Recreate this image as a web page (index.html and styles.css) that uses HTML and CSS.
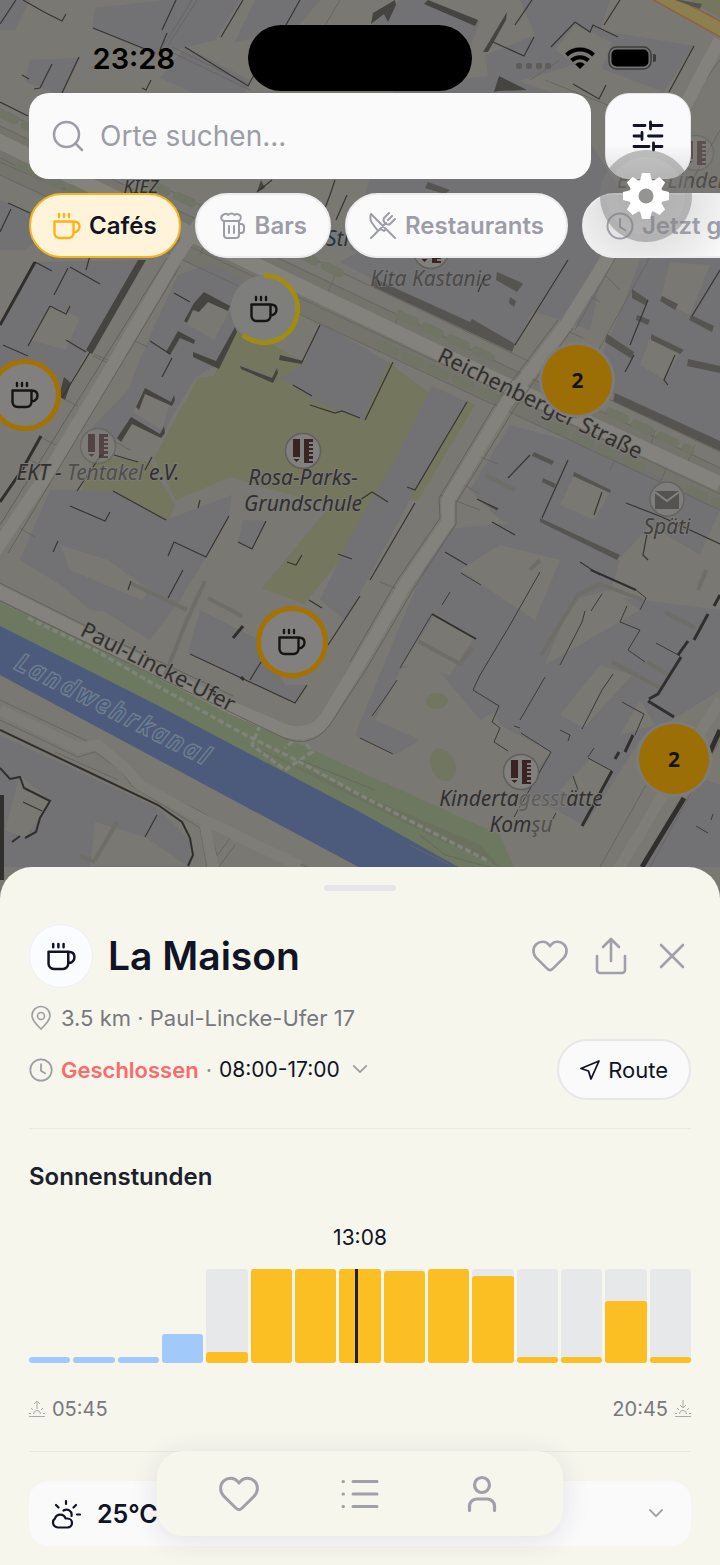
FILE: index.html
```html
<!DOCTYPE html>
<html lang="de">
<head>
<meta charset="utf-8">
<meta name="viewport" content="width=device-width, initial-scale=1">
<title>La Maison</title>
<link rel="stylesheet" href="styles.css">
</head>
<body>
<svg width="0" height="0" class="sprite" aria-hidden="true">
  <symbol id="cup" viewBox="0 0 28 28"><g fill="none" stroke="currentColor" stroke-width="2.400" stroke-linecap="round" stroke-linejoin="round"><path d="M1.500 9.500h19V21a5 5 0 0 1-5 5h-9a5 5 0 0 1-5-5zM20.500 9.500c4 0 6 2 6 5s-2 5.500-6 6M6 2v3M11 2v3M16 2v3"/></g></symbol>
  <symbol id="heart" viewBox="0 0 40 36"><path d="M20 33c-1 0-2-.6-3-1.600L5.500 20C1.500 16 1.500 9 5.500 5.500c4-3.600 10-3.300 13 .3l1.500 1.600 1.500-1.600c3-3.600 9-3.900 13-.3 4 3.500 4 10.500 0 14.500L23 31.400c-1 1-2 1.600-3 1.600z" fill="none" stroke="currentColor" stroke-width="2.800"/></symbol>
  <symbol id="clock" viewBox="0 0 28 28"><g fill="none" stroke="currentColor" stroke-width="2" stroke-linecap="round" stroke-linejoin="round"><circle cx="14" cy="14" r="12.500"/><path d="M14 7v8l5 3"/></g></symbol>
  <symbol id="chevron" viewBox="0 0 18 12"><path d="m2 2 7 7 7-7" fill="none" stroke="currentColor" stroke-width="2" stroke-linecap="round" stroke-linejoin="round"/></symbol>
  <symbol id="school" viewBox="0 0 38 38"><circle cx="19" cy="19" r="17.500" fill="#80807e" stroke="#62605d" stroke-width="1.500"/><path d="M9 7h7v18H9zM9.500 27h6L12.500 30zM20 7h9v3h-4v2h4v2h-4v2h4v2h-4v2h4v2h-4v2h4v3h-4v2h4v2h-9z" fill="#392323"/></symbol>
</svg>

<div class="app">
  <div class="map" role="region" aria-label="Karte">
    <svg class="map-art" viewBox="0 0 720 900" aria-hidden="true">
      <rect width="720" height="900" fill="#7a7872"/>
      <g fill="#74746d">
        <path d="M0 125 720 467V510L0 175z"/>
      </g>
      <g fill="#74765e">
        <path d="M237 325 214 376 198 378 154 458 176 500 230 477 330 506 262 588 304 604 350 548 440 460 445 405 388 362 300 360z"/>
        <path d="M95 456 150 462 175 505 157 545 105 518 80 495z"/><path d="M467 400 475 405 418 500 407 500z"/>
        <path d="M690 0h30v18z"/>
      </g>
      <g fill="#6c785f">
        <path d="M0 603 120 657 290 740 500 835 515 870H450L0 628z"/>
        <ellipse cx="437" cy="701" rx="11" ry="8" fill="#717660"/><ellipse cx="443" cy="765" rx="12" ry="17" transform="rotate(-25 443 765)" fill="#717660"/>
      </g>
      <path d="M240 740 340 785 480 845 500 867 430 835z" fill="#6c715f"/>
      <path d="M0 626 155 704 360 812 460 868V900H420L0 675z" fill="#4c5a7c"/>
      <path d="M28 618 95 650 150 682 240 732 300 762 360 795 490 862M260 725 252 745 285 770 312 752 300 735 285 748" fill="none" stroke="#80837a" stroke-width="3.500" stroke-dasharray="6 3"/>

      <g fill="#727274">
        <path d="M95 8 165 0 240 0 215 40 155 55 92 28z"/><path d="M0 0h30L15 30 0 30z"/><path d="M185 47 250 80 235 112 160 78z"/><path d="M255 0h65l-25 30-60 12z"/>
        <path d="M30 60 80 58 62 95 25 82z"/><path d="M375 22 400 0h30l50 22-20 50-90-45z"/><path d="M485 55 535 35 520 0h90l-20 60-100 30z"/><path d="M598 30 694 46 664 92 600 68z"/><path d="M395 85 500 75 560 95 620 190 590 330 350 250z"/>
        <path d="M0 200 30 212 58 225 25 250H0z"/>
        <path d="M34 262 138 260 88 350 63 395 0 370V325z"/><path d="M178 275 212 263 255 285 235 330 214 366 195 378 170 420 163 437 131 420 118 440 90 430 128 390 148 340z"/>
        <path d="M240 365 275 382 305 362 320 322 388 362 363 420 312 400 292 384z"/><path d="M432 386 467 402 415 490 370 575 345 620 320 600 354 530 395 460z"/>
        <path d="M50 490 113 491 166 520 232 495 229 516 206 557 180 600 150 640 20 560z"/><path d="M58 541 110 556 168 560 150 615 90 610 50 575z"/>
        <path d="M243 520 266 521 252 549 238 542z"/><path d="M200 610 260 640 285 685 307 685 295 703 188 652z"/>
        <path d="M560 260 515 345 475 325 375 280 340 262 380 240 480 240z"/><path d="M640 260 720 240V445L614 398 600 360 625 300z"/>
        <path d="M510 425 620 455 720 510 700 555 650 525 620 558 500 520 470 490z"/><path d="M440 530 540 520 620 560 590 660 480 720 430 660 400 670 375 720 420 740 395 755 355 735 390 650z"/>
        <path d="M540 575 600 595 720 610V690L640 740 585 826 520 790 551 752 500 725 480 675z"/><path d="M700 778 720 785V867H642z"/>
        <path d="M0 735 158 808 190 840V867H0z"/>
      </g>
      <g fill="#7a7872">
        <path d="M50 305 80 318 66 350 30 340z"/><path d="M205 296 230 310 214 340 185 323z"/><path d="M143 390 170 402 162 430 133 412z"/><path d="M60 545 108 560 150 590 142 600 70 570z"/>
        <path d="M500 5 525 10 510 45 480 30z"/><path d="M575 25 612 42 598 80 555 50z"/><path d="M650 338 680 352 665 380 640 365z"/><path d="M670 262 710 265 690 315 660 300z"/>
        <path d="M574 475 610 492 594 520 560 505z"/><path d="M434 616 474 638 450 675 402 665z"/><path d="M610 590 640 610 545 665 572 600z"/><path d="M600 665 632 675 584 728 560 715z"/><path d="M590 760 612 771 594 805 560 790z"/><path d="M640 700 655 725 620 735z"/>
        <path d="M500 545 560 560 535 620 460 570z"/><path d="M20 775 50 801 25 838 5 830z"/><path d="M95 822 145 837 188 866H90z"/>
      </g>

      <g fill="none" stroke="#686661" stroke-width="1">
        <path d="M0 110 720 452M0 175 720 510M0 126 720 468M0 158 720 494"/>
        <path d="M197 0 167 47M192 0 164 45M167 50 250 90M172 47 250 85M340 0 290 85M560 60 530 80M720 130 560 420M690 125 575 330M300 760 375 790M420 835 445 855 500 870M410 845 450 865M600 867 660 760M618 867 675 775M650 867 720 740"/>
        <path d="M130 339 148 347M93 356 108 363M94 354 110 361M62 398 78 406M40 437 56 445M28 459 44 467M112 440 130 450M20 528 35 537M620 290 600 270M560 328 583 338M582 292 600 302M478 456 498 464M462 484 480 494M400 590 380 582M440 495 480 510M655 430 648 455M695 445 685 468M240 265 250 240M325 300 335 275M400 310 390 340M620 450 610 470M668 465 658 486"/>
        <path d="M640 185 680 115 720 60M545 80 620 110M95 188 60 250M0 162 65 190M200 255 215 218M610 155 625 120"/>
        <path d="M0 700 85 740 113 755 140 783 198 810 265 850 310 868M0 720 78 757 95 752 120 770 132 786 200 828 207 867M210 828 230 838 217 856zM235 845 218 868M118 780 55 752"/>
      </g>
      <g fill="none" stroke="#84827c" stroke-linejoin="round">
        <path d="M-20 132 120 200 360 315 500 382 720 484" stroke-width="15"/>
        <path d="M205 215 173 262 110 370 50 470-8 555M720 40 640 190 605 262 566 325 507 402 448 500 448 522 405 585 360 662 326 718Q312 738 286 731L232 708 120 652 0 592-20 584" stroke-width="13"/>
        <path d="M0 710 78 748 98 745 125 768 140 785 200 818 300 866M720 700 612 880M205 825 214 872" stroke-width="11" stroke="#7f7d77"/>
      </g>
      <g fill="none" stroke="#62605c" stroke-width="1">
        <path d="M180 266 8 553M167 258 0 525M558 320 499 398 439 498 440 518 396 582 350 662M573 328 515 408 456 503 456 524 414 588 367 668 333 720Q315 750 284 738L0 601M0 583 120 643 233 696"/>
      </g>
      <g fill="none" stroke="#6f6d68" stroke-width="4" stroke-linejoin="round">
        <path d="M130 583 187 610M205 581 187 620 165 675M208 598 242 616M117 822 95 860M418 641 460 664 472 647M541 655 578 595 600 584 643 600M612 662 660 688M665 612 695 628M698 590 706 570M647 662 668 675M485 475 515 490M540 560 530 570M95 862 80 856"/>
      </g>
      <g fill="none" stroke="#6f7464" stroke-width="9" stroke-linecap="round" stroke-dasharray="16 12">
        <path d="M0 113 90 156 210 211M300 254 350 278M400 315 490 357M610 412 690 450M20 165 90 198M380 345 500 400M550 425 650 472M690 490 720 503"/>
      </g>
      <path d="M650-2h26l46 24v16z" fill="#8c8051" stroke="#916040" stroke-width="1.500"/>

      <g fill="#454441">
        <path d="M373 13 395 0 396 5 388 22 384 14 371 24zM428 0 478 20 475 26 424 4zM507 12 506 20 488 52 483 52zM499 76 527 90 498 91 494 92zM138 260 146 260 92 354 86 350zM204 292 230 306 228 311 208 302 199 312 193 310 187 323 184 321 194 303zM178 331 195 340 194 344 180 338 170 355 166 352zM235 327 237 332 219 369 193 357 193 352 216 361zM145 388 171 402 174 395 175 400 172 406 145 394 139 410 136 407zM131 417 160 434 164 426 165 433 161 438 132 424 121 442 117 438zM240 366 272 378 277 368 278 373 273 383 241 369zM280 355 303 361 302 364 279 360z"/>
        <path d="M64 377 71 383 65 400 59 396zM265 188 261 180 257 192z"/>
      </g>
      <g fill="#555451">
        <path d="M375 279 470 322 472 319 515 344 512 352 372 286zM497 272 520 282 523 284 517 292 496 280zM632 289 648 300 645 305 632 298zM607 334 634 352 632 359 605 342zM651 334 684 350 680 354 651 340zM662 296 678 304 675 310 660 301zM637 315 650 320 648 325 636 320zM615 393 720 441V451L613 401zM691 315 714 326 712 332 689 320zM688 359 720 366V373L687 366zM534 452 554 461 552 465 532 456zM574 472 611 490 610 493 573 476zM540 518 620 555 617 560 540 522zM543 478 556 484 554 488 542 482zM476 499 498 508 497 511zM510 297 516 301 514 307 509 303zM680 0 702 4 700 9 675 0zM428 182 450 190 445 194 425 188z"/>
      </g>
      <g fill="none" stroke="#363532" stroke-width="1.200">
        <path d="M16 0 0 24M23 0 44 12 62 21 66 14M93 28 155 53M176 0 162 30M167 33 160 50M243 0 221 37M300 0 286 25M185 47 248 86 254 75M52 64 40 88 34 89M79 57 62 93M22 75 29 79M151 80 146 90 142 88M0 102 28 116M8 203 30 213M11 209 0 232M272 180 257 192M335 180 330 195 322 216 312 228M347 195 336 220M35 262 52 271M68 268 54 295M70 267 100 284M91 252 86 270M50 306 28 346M50 306 66 314 70 306M90 352 62 398M66 340 86 352M3 345 28 356M174 293 190 302M150 341 170 354M172 358 162 377M302 362 320 325M293 385 312 396M310 405 335 413 342 411 360 418M152 457 145 470M101 455 77 491M114 455 138 462"/>
        <path d="M493 42 524 56 534 37M515 25 532 0M551 47 575 22 590 32 593 25 618 37M620 0 604 25M694 46 669 92M573 84 599 99 606 85M568 260 515 345M634 355 625 372M675 355 664 380 668 385M720 270 692 316M648 300 630 345M467 402 415 490 407 487M393 362 365 420M360 500 372 492 388 502M415 503 370 580M530 455 508 478M602 492 594 515M568 460 542 518M477 499 498 509M445 552 467 565M492 522 515 535M580 562 600 575M626 503 662 517 720 544M647 534 643 555 648 560M490 230 480 255M430 230 425 245M485 275 478 292"/>
        <path d="M229 516 206 557 174 542 168 556M113 491 166 520M70 506 105 521 110 512M53 552 58 541M200 500 198 508M266 521 252 549 238 542M338 554 352 559M183 570 168 598M302 555 296 565 287 562M128 590 131 581M190 654 295 703 307 685M261 662 250 680M360 596 328 645M309 600 322 608M157 815 145 837M23 802 42 811"/>
      </g>
      <g fill="none" stroke="#3b3a37" stroke-width="1">
        <path d="M461 573 481 585M450 592 442 605M432 614 400 668M397 680 385 698 372 716M540 572 510 625 480 675 473 690 499 706 492 722 500 728 494 742 508 751M602 594 591 611M585 611 582 622 560 665M545 677 520 720M590 570 636 590 646 598 640 610M627 606 620 622 640 630 628 650 645 662M656 643 680 656M613 674 602 690 582 729M622 702 644 714 635 735M521 733 551 752 514 817M560 730 570 735 568 741M520 728 514 726M360 738 393 754M588 757 594 748M588 758 612 771M573 776 578 790M556 813 545 833M711 820 713 814M696 826 708 833"/>
      </g>
      <g fill="none" stroke="#302f2d" stroke-width="4">
        <path d="M35 262 0 325M41 436 22 470 0 502" stroke-width="3"/><path d="M432 614 476 639M591 570 636 590" stroke-width="2"/>
        <path d="M708 614 694 640M688 641 678 655M681 657 658 694 649 699M648 701 674 717M720 595 714 606M633 735 625 752M619 752 615 759M612 771 582 826" stroke-width="3"/>
        <path d="M720 730 710 752M684 798 642 867" stroke-width="5"/>
        <path d="M0 730 80 768 158 805 182 822 190 838 193 855 188 866" stroke-width="2"/>
        <path d="M0 768 10 779 20 777 24 788 50 801 40 818 36 832 25 838M12 842 20 836" stroke-width="2"/><path d="M2 795V880" stroke-width="4"/>
        <path d="M243 626 238 632 233 638M212 693 216 695M241 677 244 680" stroke-width="3"/>
      </g>

      <g class="place">
        <text x="141" y="193" text-anchor="middle" class="district">KIEZ</text>
        <text x="326" y="246" class="district blue">Str</text>
        <text x="617" y="188" opacity=".6">EKT - Linden</text>
        <text x="431" y="286" text-anchor="middle" opacity=".6">Kita Kastanie</text>
        <text x="98" y="480" text-anchor="middle">EKT - <tspan fill-opacity=".6">Tentakel</tspan> e.V.</text>
        <text x="303" y="485" text-anchor="middle">Rosa-Parks-</text>
        <text x="303" y="511" text-anchor="middle">Grundschule</text>
        <text x="667" y="534" text-anchor="middle" fill-opacity=".8">Späti</text>
        <text x="521" y="806" text-anchor="middle">Kinderta<tspan fill-opacity=".4">gesst</tspan>ätte</text>
        <text x="521" y="832" text-anchor="middle">Kom<tspan fill-opacity=".6">şu</tspan></text>
      </g>
      <text class="street" transform="translate(436 361) rotate(26)">Reichenberger Straße</text>
      <text class="street" transform="translate(79 635) rotate(27)">Paul-Lincke-Ufer</text>
      <text class="water" transform="translate(14 668) rotate(27)">Landwehrkanal</text>
      <use href="#school" x="284" y="432" width="38" height="38"/>
      <use href="#school" x="79" y="427" width="38" height="38" opacity=".6"/>
      <use href="#school" x="502" y="753" width="38" height="38"/>
      <use href="#school" x="412" y="232" width="38" height="38"/>
      <use href="#school" x="677" y="134" width="38" height="38" opacity=".45"/>
      <circle cx="667" cy="499" r="17" fill="#7d7d7b" stroke="#666462" stroke-width="1.500"/>
      <path d="M655 491h24v18h-24z" fill="#555352"/><path d="m655 492 12 9 12-9" fill="none" stroke="#828280" stroke-width="2"/>
    </svg>

    <button class="pin pin-a" aria-label="Café"><svg class="ring" viewBox="0 0 72 72"><circle cx="36" cy="36" r="33.500" fill="#7e7e7c"/><path d="M36 2.500A33.500 33.500 0 1 1 15 62" fill="none" stroke="#a08c12" stroke-width="5"/></svg><svg class="glyph"><use href="#cup"/></svg></button>
    <button class="pin pin-b full" aria-label="Café"><svg class="glyph"><use href="#cup"/></svg></button>
    <button class="pin pin-c full" aria-label="Café"><svg class="glyph"><use href="#cup"/></svg></button>
    <button class="pin pin-d cluster">2</button>
    <button class="pin pin-e cluster">2</button>
  </div>

  <header class="top">
    <div class="status">
      <time class="time">23:28</time>
      <div class="island"></div>
      <div class="signals">
        <svg width="36" height="8" viewBox="0 0 36 8" class="dots"><g fill="#5e5d5a"><rect y="1" width="6" height="6" rx="2"/><rect x="10" y="1" width="6" height="6" rx="2"/><rect x="20" y="1" width="6" height="6" rx="2"/><rect x="29" y="1" width="6" height="6" rx="2"/></g></svg>
        <svg width="30" height="22" viewBox="0 0 30 22"><g fill="none" stroke="#000" stroke-width="4"><path d="M1.500 8a19.500 19.500 0 0 1 27 0"/><path d="M6.500 13.500a12.500 12.500 0 0 1 17 0"/></g><path d="m15 22-4.800-4.800a7 7 0 0 1 9.600 0z"/></svg>
        <svg width="48" height="24" viewBox="0 0 48 24"><rect x="1" y="1" width="42" height="22" rx="7.500" fill="none" stroke="#3d3c3a" stroke-width="1.500"/><rect x="3.500" y="3.500" width="37" height="17" rx="5"/><path d="M45 8v8a4 4 0 0 0 0-8z" fill="#3d3c3a"/></svg>
      </div>
    </div>
    <div class="search-row">
      <label class="search">
        <svg width="32" height="32" viewBox="0 0 32 32" fill="none" stroke="currentColor" stroke-width="2.500" stroke-linecap="round"><circle cx="14.500" cy="14.500" r="12.500"/><path d="m23.500 23.500 6.500 6.500"/></svg>
        <input type="search" placeholder="Orte suchen..." aria-label="Orte suchen">
      </label>
      <button class="filter" aria-label="Filter"><svg width="32" height="32" viewBox="0 0 32 32" fill="none" stroke="currentColor" stroke-width="2.800" stroke-linecap="round"><path d="M2 5.500h11M20 5.500h10M18.500 2v7M2 16h8M16.500 16H30M10 12.500v7M2 26.500h15M22 26.500h8M21.500 23v7"/></svg></button>
    </div>
    <nav class="chips" aria-label="Kategorien">
      <button class="chip active" aria-pressed="true"><svg><use href="#cup"/></svg>Cafés</button>
      <button class="chip"><svg viewBox="0 0 28 28" fill="none" stroke="currentColor" stroke-width="2" stroke-linecap="round" stroke-linejoin="round"><path d="M5 9v14a3 3 0 0 0 3 3h9a3 3 0 0 0 3-3V9zM20 12h2a3 3 0 0 1 3 3v3a3 3 0 0 1-3 3h-2M10 14v7M15 14v7M5 9a3.200 3.200 0 0 1-1-6c2-2 4-1.500 5 0 1.500-2 5-2 6.500 0 2-1.500 5-1 6 1 .8 2.500-.5 4.500-2 5"/></svg>Bars</button>
      <button class="chip"><svg viewBox="0 0 28 28" fill="none" stroke="currentColor" stroke-width="2" stroke-linecap="round" stroke-linejoin="round"><path d="M17 17 26 26M2 26 17 11M12 17 9 19 3 11C1 8 1 5 2 2L17 17l-2 2zM20 1l-5 5c-1 2 0 4 1 5s3 2 5 1l5-5M23 4l-4 4"/></svg>Restaurants</button>
      <button class="chip late"><svg><use href="#clock"/></svg>Jetzt geöffnet</button>
    </nav>
    <button class="gear" aria-label="Einstellungen"><svg width="48" height="48" viewBox="-24 -24 48 48"><g fill="#fff"><circle r="17"/><g id="tooth"><path d="M-6-15-4-23H4L6-15zM-6 15-4 23H4L6 15z"/></g><use href="#tooth" transform="rotate(45)"/><use href="#tooth" transform="rotate(90)"/><use href="#tooth" transform="rotate(135)"/></g><circle r="7.500" fill="#949493"/></svg></button>
  </header>

  <main class="sheet">
    <div class="handle"></div>
    <div class="title-row">
      <div class="badge"><svg width="29" height="29"><use href="#cup"/></svg></div>
      <h1>La Maison</h1>
      <div class="actions">
        <button aria-label="Merken"><svg width="38" height="34"><use href="#heart"/></svg></button>
        <button aria-label="Teilen"><svg width="32" height="38" viewBox="0 0 32 38" fill="none" stroke="currentColor" stroke-width="2.600" stroke-linecap="round" stroke-linejoin="round"><path d="M2 19v14a3 3 0 0 0 3 3h22a3 3 0 0 0 3-3V19M16 24V2M8 10l8-8 8 8"/></svg></button>
        <button aria-label="Schließen"><svg width="26" height="26" viewBox="0 0 26 26" fill="none" stroke="currentColor" stroke-width="2.600" stroke-linecap="round"><path d="m2 2 22 22M24 2 2 24"/></svg></button>
      </div>
    </div>
    <p class="line address"><svg width="24" height="26" viewBox="0 0 24 26" fill="none" stroke="currentColor" stroke-width="1.600"><path d="M12 24C9 21 3 16 3 10.500a9 9 0 0 1 18 0C21 16 15 21 12 24z"/><circle cx="12" cy="11" r="3.500"/></svg><span>3.5 km · Paul-Lincke-Ufer 17</span></p>
    <div class="hours-row">
      <button class="line hours"><svg width="24" height="26"><use href="#clock"/></svg><span class="state"><b>Geschlossen</b><i>·</i><span class="clock">08:00-17:00</span></span><svg class="more" width="16" height="11"><use href="#chevron"/></svg></button>
      <button class="route"><svg width="20" height="20" viewBox="0 0 20 20" fill="none" stroke="currentColor" stroke-width="1.800" stroke-linejoin="round"><path d="M19 1 1 8.500l7.500 2.500L11 19z"/></svg>Route</button>
    </div>
    <section class="sun">
      <h2>Sonnenstunden</h2>
      <p class="now">13:08</p>
      <div class="chart">
        <span class="bar shade" style="height:6%"></span>
        <span class="bar shade" style="height:6%"></span>
        <span class="bar shade" style="height:6%"></span>
        <span class="bar shade" style="height:31%"></span>
        <span class="slot"><span class="bar" style="height:12%"></span></span>
        <span class="slot"><span class="bar" style="height:100%"></span></span>
        <span class="slot"><span class="bar" style="height:100%"></span></span>
        <span class="slot"><span class="bar" style="height:100%"></span></span>
        <span class="slot"><span class="bar" style="height:98%"></span></span>
        <span class="slot"><span class="bar" style="height:100%"></span></span>
        <span class="slot"><span class="bar" style="height:93%"></span></span>
        <span class="slot"><span class="bar" style="height:6%"></span></span>
        <span class="slot"><span class="bar" style="height:6%"></span></span>
        <span class="slot"><span class="bar" style="height:66%"></span></span>
        <span class="slot"><span class="bar" style="height:6%"></span></span>
        <span class="cursor" style="left:49.300%"></span>
      </div>
      <div class="range">
        <span><svg width="16" height="18" viewBox="0 0 16 18" fill="none" stroke="currentColor"><path d="M0 16.500h16M4.500 14a3.500 3.500 0 0 1 7 0M8 9V1M5 4l3-3 3 3M0 13.500h2M14 13.500h2M2 8l2 2M14 8l-2 2"/></svg>05:45</span>
        <span>20:45<svg width="16" height="18" viewBox="0 0 16 18" fill="none" stroke="currentColor"><path d="M0 16.500h16M4.500 14a3.500 3.500 0 0 1 7 0M8 0v8M5 5l3 3 3-3M0 13.500h2M14 13.500h2M2 8l2 2M14 8l-2 2"/></svg></span>
      </div>
    </section>
    <button class="weather">
      <svg width="30" height="30" viewBox="0 0 30 30" fill="none" stroke="currentColor" stroke-width="2.200" stroke-linecap="round" stroke-linejoin="round"><path d="M7 28.500a5 5 0 0 1-5-5 5 5 0 0 1 2-4 5.500 5.500 0 0 1 10.500 0h2a4.500 4.500 0 0 1 0 9zM12.500 11.500c4-2.500 9 .5 8 5.500M15 2v3M5 6l2.500 2.500M25 6l-2.500 2.500M26 15.500h3"/></svg>
      <span>25°C</span>
      <svg class="more" width="16" height="11"><use href="#chevron"/></svg>
    </button>
  </main>

  <nav class="tabs" aria-label="Hauptmenü">
    <button aria-label="Favoriten"><svg width="42" height="38"><use href="#heart"/></svg></button>
    <button aria-label="Liste"><svg width="38" height="30" viewBox="0 0 38 30" fill="none" stroke="currentColor" stroke-width="3" stroke-linecap="round"><path d="M2 2.500h.5M2 15h.5M2 27.500h.5M12 2.500h24M12 15h24M12 27.500h24"/></svg></button>
    <button aria-label="Profil"><svg width="30" height="38" viewBox="0 0 30 38" fill="none" stroke="currentColor" stroke-width="3.200" stroke-linecap="round"><circle cx="15" cy="10" r="7.500"/><path d="M2.500 35.500V31a7 7 0 0 1 7-7h11a7 7 0 0 1 7 7v4.500"/></svg></button>
  </nav>
</div>
</body>
</html>
```
FILE: styles.css
```css
* { box-sizing: border-box; }
body { margin: 0; background: #f6f6ed; font-family: Inter, "Liberation Sans", sans-serif; color: #101424; }
button { font: inherit; color: inherit; border: 0; padding: 0; background: none; cursor: pointer; }
h1, h2, p { margin: 0; }
svg { display: block; flex: none; }
.sprite { position: absolute; }

.app { position: relative; min-height: 100vh; display: flex; flex-direction: column; overflow: hidden; }
.map { position: absolute; top: 0; left: 0; width: 100%; aspect-ratio: 4 / 5; background: #7a7872; }
.map-art { width: 100%; height: 100%; }
.map-art text { font-family: "Noto Sans", sans-serif; font-size: 21px; fill: #31302f; }
.place { font-style: italic; paint-order: stroke; stroke: #7b7a77; stroke-width: 2px; }
.map-art .district { font-size: 18px; }
.map-art .blue { fill: #253442; font-size: 21px; }
.map-art .street { font-size: 22px; paint-order: stroke; stroke: #7d7b76; stroke-width: 2px; }
.map-art .water { font-size: 24px; font-style: italic; letter-spacing: 4px; fill: #425c83; paint-order: stroke; stroke: #737d88; stroke-width: 3px; }

.pin { position: absolute; width: 72px; height: 72px; margin: -36px 0 0 -36px; border-radius: 50%; display: grid; place-items: center; color: #141416; }
.pin .glyph { width: 28px; height: 28px; grid-area: 1 / 1; }
.pin .ring { width: 72px; height: 72px; grid-area: 1 / 1; }
.full { border: 5px solid #a37200; background: #81807f; }
.cluster { background: #9b6f06; border: 1px solid #7d7c79; box-shadow: 0 0 0 2px #7d7c79; font: bold 21px "Noto Sans", sans-serif; }
.pin-a { left: 36.600%; top: 34.300%; }
.pin-b { left: 3.500%; top: 43.900%; }
.pin-c { left: 40.600%; top: 71.300%; }
.pin-d { left: 80.200%; top: 42.200%; }
.pin-e { left: 93.600%; top: 84.300%; }

.top { position: relative; flex: 1; display: flex; flex-direction: column; pointer-events: none; }
.top button, .top label { pointer-events: auto; }
.status { display: grid; grid-template-columns: 1fr 224px 1fr; align-items: center; padding-top: 25px; height: 91px; }
.time { font-size: 29px; font-weight: 600; color: #000; text-align: right; padding-right: 73px; }
.island { height: 66px; border-radius: 33px; background: #000; }
.signals { display: flex; align-items: center; gap: 13px; padding-left: 44px; }
.dots { margin-top: 16px; }
.search-row { display: flex; gap: 14px; padding: 2px 29px 14px; }
.search { flex: 1; min-width: 0; height: 86px; display: flex; align-items: center; gap: 16px; padding: 0 23px; border-radius: 20px; background: #fafafa; color: #9c9da6; }
.search input { flex: 1; min-width: 0; border: 0; outline: 0; background: none; font: 28px Inter, sans-serif; color: #101424; padding: 0; }
.search input::placeholder { color: #9c9da6; opacity: 1; }
.filter { width: 86px; height: 86px; display: grid; place-items: center; border-radius: 24px; border: 1px solid #e4e4e7; background: linear-gradient(#fafafc 60%, #dededf); }
.chips { display: flex; gap: 14px; padding-left: 29px; overflow: hidden; }
.chip { flex: none; height: 65px; display: flex; align-items: center; gap: 8px; padding: 0 22px; border: 2px solid #ececef; border-radius: 33px; background: #fafafb; color: #9c9da6; font-size: 24px; font-weight: 600; white-space: nowrap; }
.chip svg { width: 28px; height: 28px; }
.active { background: #fff3d9; border-color: #f6b51e; color: #101424; }
.active svg { color: #fbb317; }
.late { background: radial-gradient(circle at 60px 0, #d0d0d0 0, #fafafb 100px); }
.gear { position: absolute; top: 150px; right: 28px; width: 92px; height: 92px; border-radius: 50%; display: grid; place-items: center; background: rgba(125, 125, 125, .42); border: 7px solid rgba(140, 140, 140, .1); }

.sheet { position: relative; background: #f6f6ed; border-radius: 32px 32px 0 0; padding: 18px 29px 19px; }
.handle { width: 72px; height: 6px; border-radius: 3px; background: #e5e5e9; margin: 0 auto 33px; }
.title-row { display: flex; align-items: center; gap: 15px; height: 64px; }
.badge { width: 64px; height: 64px; border-radius: 50%; background: #fafcff; border: 1px solid #f0f0f2; display: grid; place-items: center; }
h1 { flex: 1; font-size: 39px; font-weight: 600; line-height: 48px; }
.actions { display: flex; align-items: center; gap: 26px; color: #a0a1a8; padding-right: 6px; }
.actions button:last-child { margin-left: 6px; }
.line { display: flex; align-items: center; gap: 8px; font-size: 22px; line-height: 30px; white-space: nowrap; }
.line > svg { color: #9c9da2; }
.address { margin-top: 15px; color: #77787e; }
.hours-row { display: flex; align-items: center; justify-content: space-between; margin-top: 6px; padding-bottom: 28px; border-bottom: 1px solid #e9e9e5; }
.state { display: flex; gap: 7px; }
.hours b { font-weight: 600; color: #fa6b6b; }
.hours i { font-style: normal; color: #8c8d92; }
.hours .clock { font-size: 21px; }
.hours .more { margin-left: 4px; }
.route { height: 61px; display: flex; align-items: center; gap: 8px; padding: 0 21px; border: 2px solid #e7e7ea; border-radius: 31px; background: #fafafb; font-size: 22px; }
.sun { padding: 32px 0 28px; border-bottom: 1px solid #e9e9e5; }
h2 { font-size: 24px; line-height: 32px; font-weight: 600; color: #1b212c; }
.now { text-align: center; font-size: 21px; line-height: 30px; margin: 30px 0 16px; }
.chart { position: relative; height: 94px; display: grid; grid-template-columns: repeat(15, 1fr); gap: 3px; align-items: end; }
.slot { height: 100%; display: flex; align-items: flex-end; background: #e7e8ea; border-radius: 4px; }
.bar { display: block; width: 100%; background: #fbbf24; border-radius: 3px; }
.shade { background: #a1cafa; }
.cursor { position: absolute; top: 0; width: 3px; height: 100%; background: #22231d; }
.range { display: flex; justify-content: space-between; margin-top: 32px; font-size: 20px; line-height: 28px; color: #77787e; }
.range span { display: flex; align-items: center; gap: 7px; }
.range svg { color: #aaaaa9; }
.weather { width: 100%; height: 65px; display: flex; align-items: center; gap: 16px; margin-top: 29px; padding: 0 27px 0 22px; border-radius: 20px; background: #fafafb; font-size: 25px; font-weight: 600; }
.weather .more { margin-left: auto; color: #9c9da2; }
.tabs { position: absolute; left: 50%; bottom: 29px; transform: translateX(-50%); width: 406px; max-width: 90%; height: 85px; display: flex; align-items: center; justify-content: space-evenly; border-radius: 26px; background: #f6f6ed; color: #a0a1a8; box-shadow: 0 4px 28px rgba(40, 40, 60, .11); }
.tabs button { width: 80px; display: grid; place-items: center; }
```
